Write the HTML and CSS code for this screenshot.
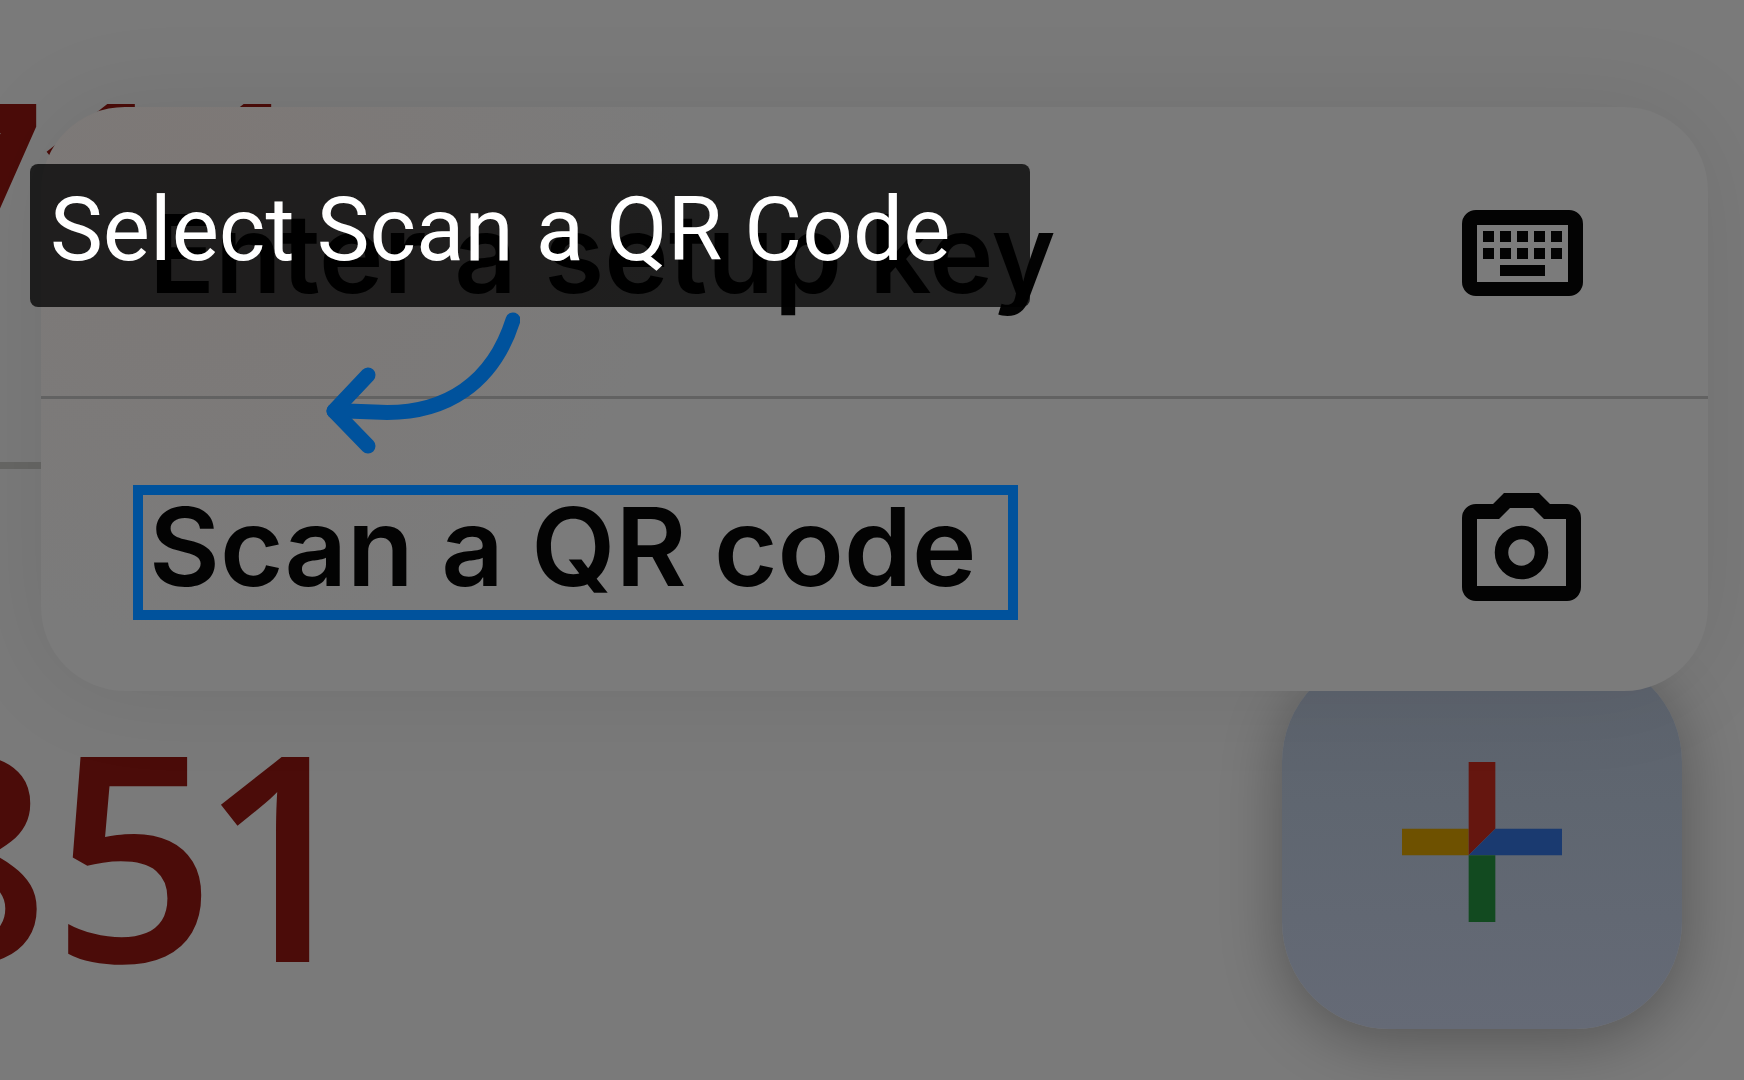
FILE: index.html
```html
<!DOCTYPE html>
<html lang="en">
<head>
    <meta charset="UTF-8">
    <meta name="viewport" content="width=device-width, initial-scale=1.0">
    <title>Scan a QR Code</title>
    <link rel="stylesheet" href="styles.css">
</head>
<body>
    <main class="screen">
        <!-- Account codes behind the menu -->
        <section class="codes">
            <p class="code code-first">711</p>
            <p class="code code-second">851</p>
        </section>

        <button class="add-button" type="button" aria-label="Add a code">
            <svg class="plus" viewBox="0 0 24 24" aria-hidden="true">
                <path fill="#6e5100" d="M0 10h10v4H0z"/>
                <path fill="#65160f" d="M10 0h4v10l-4 4z"/>
                <path fill="#1a3a70" d="M14 10h10v4H10z"/>
                <path fill="#124a20" d="M10 14h4v10h-4z"/>
            </svg>
        </button>

        <!-- Menu -->
        <nav class="menu">
            <button class="menu-item" type="button">
                <span class="menu-label">Enter a setup key</span>
                <svg class="menu-icon" width="121" height="86" viewBox="0 0 121 86" aria-hidden="true">
                    <path fill-rule="evenodd" d="M14 0h93a14 14 0 0 1 14 14v58a14 14 0 0 1-14 14H14A14 14 0 0 1 0 72V14A14 14 0 0 1 14 0zM15 15v57h91V15z"/>
                    <path d="M21 21h11v11H21zM38 21h11v11H38zM55 21h11v11H55zM72 21h11v11H72zM89 21h11v11H89zM21 38h11v11H21zM38 38h11v11H38zM55 38h11v11H55zM72 38h11v11H72zM89 38h11v11H89zM38 55h45v11H38z"/>
                </svg>
            </button>
            <button class="menu-item" type="button">
                <span class="menu-label highlight">Scan a QR code</span>
                <svg class="menu-icon" width="121" height="108" viewBox="0 0 121 108" aria-hidden="true">
                    <path fill-rule="evenodd" d="M42 0h35l11 11h17a14 14 0 0 1 14 14v69a14 14 0 0 1-14 14H14A14 14 0 0 1 0 94V25a14 14 0 0 1 14-14h17zM48 15L37 26H15v67h89V26H82L71 15z"/>
                    <circle cx="59.5" cy="59.5" r="20" fill="none" stroke="#030303" stroke-width="13.5"/>
                </svg>
            </button>
        </nav>

        <!-- Callout -->
        <div class="callout">Select Scan a QR Code</div>
        <svg class="arrow" width="200" height="150" viewBox="0 0 200 150" aria-hidden="true">
            <path d="M193 10C174 70 128 107 54 102Q34 101 14 101"/>
            <path d="M48 65L14 101L48 136"/>
        </svg>
    </main>
</body>
</html>
```
FILE: styles.css
```css
/* General Reset */
* {
    margin: 0;
    padding: 0;
    box-sizing: border-box;
}

body {
    font-family: Inter, "Liberation Sans", sans-serif;
    background-color: #7a7a7a;
}

.screen {
    position: relative;
    min-height: 100vh;
    overflow: hidden;
}

/* Account codes */
.code {
    display: flex;
    justify-content: flex-end;
    font-family: "Open Sans", "Noto Sans", sans-serif;
    font-size: 287px;
    font-weight: 600;
    font-variant-numeric: proportional-nums;
    line-height: 340px;
    color: #4b0c09;
}

.code-first {
    width: 314px;
    height: 469px;
    padding-top: 28px;
}

/* Line between the two accounts */
.code-first::before {
    content: "";
    position: absolute;
    top: 462px;
    left: 0;
    width: 60px;
    height: 7px;
    background-color: #666664;
}

.code-second {
    width: 352px;
    padding-top: 212px;
}

/* Add button */
.add-button {
    position: absolute;
    right: 62px;
    top: 655px;
    width: 400px;
    height: 374px;
    display: flex;
    justify-content: center;
    align-items: center;
    border: none;
    border-radius: 107px;
    background: linear-gradient(#5c626c, #5f6670 40%, #656a76);
    box-shadow: 0 12px 60px rgba(0, 0, 0, 0.3);
}

.plus {
    width: 160px;
    height: 160px;
}

/* Menu */
.menu {
    position: absolute;
    top: 107px;
    left: 41px;
    right: 36px;
    border-radius: 84px;
    background-color: #7b7b7b;
    background-image: radial-gradient(circle at 10% 10%, #7d7876, #7b7b7b 30%);
    box-shadow: 0 0 100px rgba(0, 0, 0, 0.08);
}

.menu-item {
    display: flex;
    justify-content: space-between;
    align-items: center;
    width: 100%;
    height: 292px;
    padding: 3px 125px 0 108px;
    border: none;
    background: none;
    font-family: inherit;
    font-size: 109px;
    font-weight: 600;
    line-height: 115px;
    color: #030303;
}

.menu-item:first-child {
    border-bottom: 3px solid #626262;
}

.menu-label {
    position: relative;
}

.menu-icon {
    fill: #030303;
}

.highlight::after {
    content: "";
    position: absolute;
    inset: -4px -42px -16px -16px;
    border: 10px solid #00529c;
}

/* Callout */
.callout {
    position: absolute;
    top: 164px;
    left: 30px;
    width: 1000px;
    padding: 0 20px;
    border-radius: 8px;
    background-color: rgba(0, 0, 0, 0.75);
    font-family: Roboto, "Liberation Sans", sans-serif;
    font-size: 89px;
    line-height: 132px;
    height: 143px;
    color: #ffffff;
    white-space: nowrap;
}

.arrow {
    position: absolute;
    top: 310px;
    left: 320px;
    fill: none;
    stroke: #00529c;
    stroke-width: 15px;
    stroke-linecap: round;
    stroke-linejoin: round;
}
```
